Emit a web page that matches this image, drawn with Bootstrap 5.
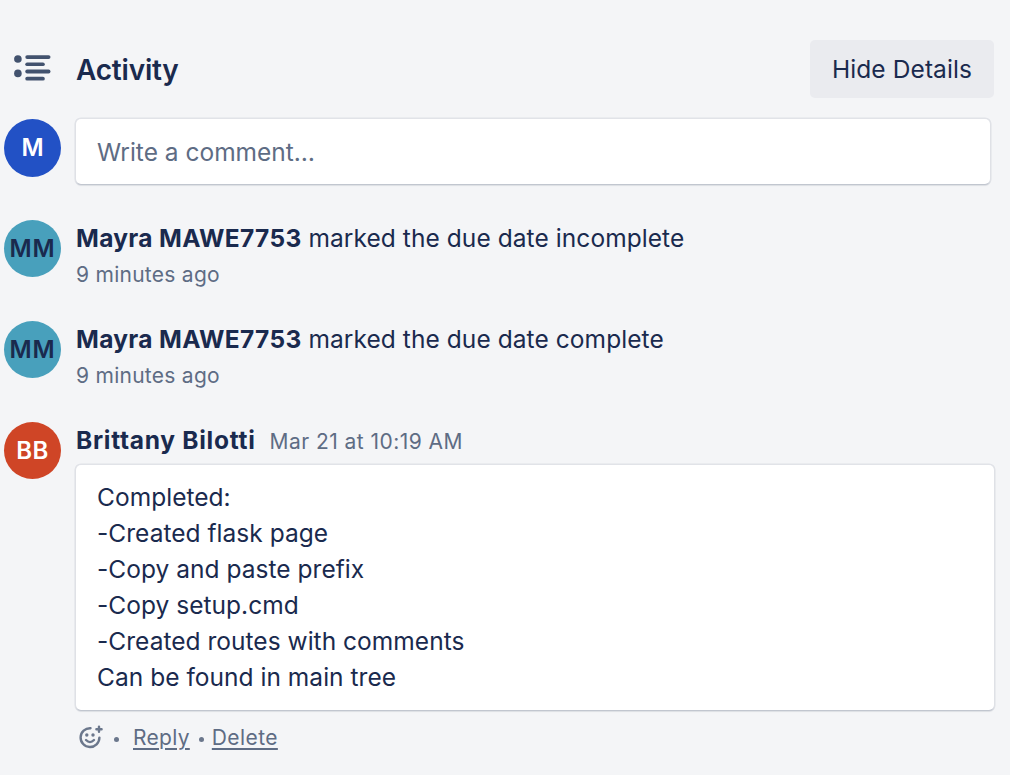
<!DOCTYPE html>
<html lang="en">
<head>
<meta charset="utf-8">
<meta name="viewport" content="width=device-width, initial-scale=1">
<title>Activity</title>
<link href="https://cdn.jsdelivr.net/npm/bootstrap@5.3.0/dist/css/bootstrap.min.css" rel="stylesheet">
<style>
  body { background: #f4f5f7; color: #1a2a4e; font-family: Inter, "Liberation Sans", sans-serif; font-size: 24.5px; line-height: 36px; overflow: hidden; }
  .panel { padding: 40px 16px 0 4px; }
  .panel-head { height: 58px; margin-bottom: 21px; }
  .head-icon { width: 72px; padding-left: 10px; margin-top: -2px; }
  .head-title { font-size: 28px; font-weight: 600; line-height: 36px; padding-top: 1px; letter-spacing: -.2px; }
  .btn-details { --bs-btn-color: #1a2a4e; --bs-btn-bg: #eaebef; --bs-btn-hover-bg: #dfe1e6; --bs-btn-hover-color: #1a2a4e; width: 184px; height: 58px; font-size: 24.5px; letter-spacing: .1px; border-radius: 5px; padding: 0; border: 0; }
  .avatar { width: 57px; height: 57px; margin-right: 15px; font-weight: 600; font-size: 24px; }
  .avatar-blue { background: #2251c5; height: 58px; }
  .avatar-teal { background: #48a0bc; letter-spacing: .8px; }
  .avatar-red { background: #cf4526; letter-spacing: .4px; }
  .box { background: #fff; border-radius: 5px; box-shadow: 0 1.5px 2px -1px rgba(9,30,66,.2), 0 0 0 1.6px rgba(9,30,66,.08); }
  .box-input { height: 65px; margin-right: 4px; padding: 0 21px; color: #5e6c84; }
  .box-comment { padding: 14px 21px 15px; margin-top: 5px; letter-spacing: .03px; }
  .entry { height: 101px; }
  .member { letter-spacing: .33px; }
  .author { letter-spacing: .72px; }
  .what { letter-spacing: .07px; }
  .muted { color: #5e6c84; font-size: 21px; letter-spacing: .27px; }
  .when { padding-top: 1px; }
  .stamp { margin-left: 14px; letter-spacing: .45px; }
  .actions { height: 56px; padding-left: 2px; }
  .actions a { color: #5e6c84; text-underline-offset: 3px; text-decoration-thickness: 2px; }
  .actions svg { margin-top: -3px; }
  .sep { width: 5px; height: 5px; background: #6b778c; border-radius: 50%; margin: 3px 0 0 9px; }
  .sep-first { margin-left: 10px; }
  .reply-link { margin-left: 14px; letter-spacing: .3px; }
  .delete-link { margin-left: 8px; letter-spacing: .4px; }
</style>
</head>
<body>
<main class="panel">
  <header class="panel-head d-flex align-items-center">
    <div class="head-icon flex-shrink-0 d-flex">
      <svg width="38" height="28" viewBox="0 0 38 28" fill="#42526e"><circle cx="3.9" cy="5" r="3.8"/><circle cx="3.9" cy="19.4" r="3.8"/><rect x="11.3" y="1.2" width="25.2" height="3.8" rx="1.9"/><rect x="11.3" y="8.4" width="19.5" height="3.7" rx="1.85"/><rect x="11.3" y="15.6" width="25.2" height="3.8" rx="1.9"/><rect x="11.3" y="22.8" width="19.5" height="3.7" rx="1.85"/></svg>
    </div>
    <h1 class="head-title mb-0 flex-grow-1">Activity</h1>
    <button type="button" class="btn btn-details">Hide Details</button>
  </header>

  <div class="d-flex entry">
    <div class="avatar avatar-blue rounded-circle text-white d-flex align-items-center justify-content-center flex-shrink-0">M</div>
    <div class="flex-grow-1"><div class="box box-input d-flex align-items-center">Write a comment…</div></div>
  </div>

  <div class="d-flex entry">
    <div class="avatar avatar-teal rounded-circle d-flex align-items-center justify-content-center flex-shrink-0">MM</div>
    <div>
      <div><strong class="member">Mayra MAWE7753</strong> <span class="what">marked the due date incomplete</span></div>
      <div class="muted when">9 minutes ago</div>
    </div>
  </div>

  <div class="d-flex entry">
    <div class="avatar avatar-teal rounded-circle d-flex align-items-center justify-content-center flex-shrink-0">MM</div>
    <div>
      <div><strong class="member">Mayra MAWE7753</strong> <span class="what">marked the due date complete</span></div>
      <div class="muted when">9 minutes ago</div>
    </div>
  </div>

  <article class="d-flex">
    <div class="avatar avatar-red rounded-circle text-white d-flex align-items-center justify-content-center flex-shrink-0">BB</div>
    <div class="flex-grow-1">
      <div class="d-flex align-items-baseline"><strong class="author">Brittany Bilotti</strong><span class="muted stamp">Mar 21 at 10:19 AM</span></div>
      <div class="box box-comment">Completed:<br>-Created flask page<br>-Copy and paste prefix<br>-Copy setup.cmd<br>-Created routes with comments<br>Can be found in main tree</div>
      <div class="actions muted d-flex align-items-center">
        <svg width="26" height="26" viewBox="0 0 26 26" fill="none" stroke="#6b778c" stroke-width="2.4" stroke-linecap="round"><path d="M12.5 4.2A9.4 9.4 0 1 0 21.4 13.6M8 16Q12 20.2 16 16"/><path d="M21 2.6v5.2M18.4 5.2h5.2"/><g fill="#6b778c" stroke="none"><circle cx="8.8" cy="11" r="1.7"/><circle cx="15" cy="11" r="1.7"/></g></svg>
        <span class="sep sep-first"></span>
        <a href="#" class="reply-link">Reply</a>
        <span class="sep"></span>
        <a href="#" class="delete-link">Delete</a>
      </div>
    </div>
  </article>
</main>
<script src="https://cdn.jsdelivr.net/npm/bootstrap@5.3.0/dist/js/bootstrap.bundle.min.js"></script>
</body>
</html>
